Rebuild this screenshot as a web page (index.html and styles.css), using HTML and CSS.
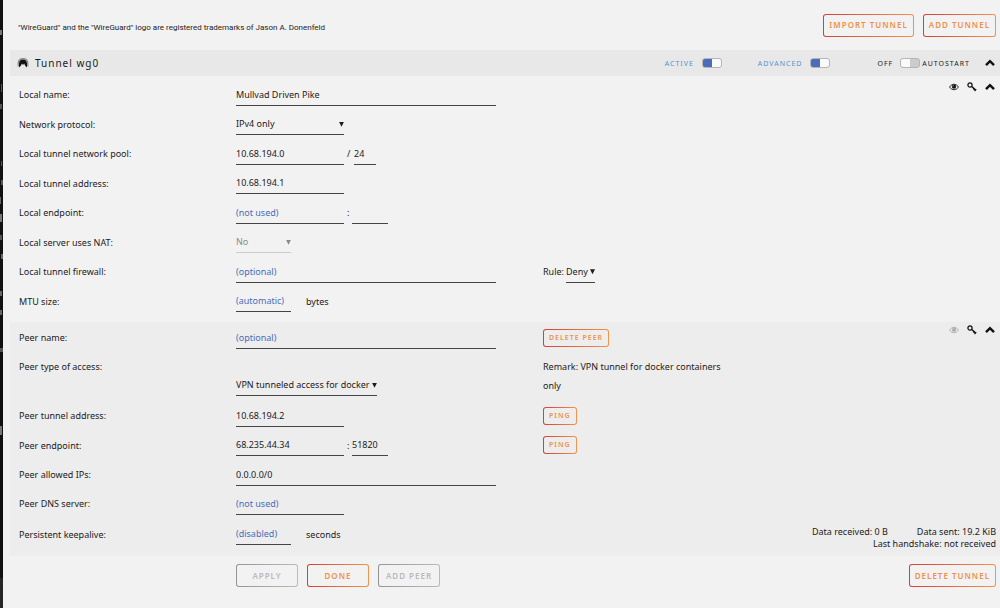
FILE: index.html
```html
<!DOCTYPE html>
<html lang="en">
<head>
<meta charset="utf-8">
<title>WireGuard VPN</title>
<link rel="stylesheet" href="styles.css">
</head>
<body>
<svg class="defs" aria-hidden="true">
  <symbol id="chevron" viewBox="0 0 10 8"><path d="M1 6.2 5 2.2 9 6.2" fill="none" stroke="currentColor" stroke-width="2.4"/></symbol>
  <symbol id="eye" viewBox="0 0 10 8"><path d="M.4 4Q5-1.6 9.600 4 5 9.600.4 4Z" fill="none" stroke="currentColor" stroke-width=".9"/><circle cx="5" cy="3.700" r="2.100" fill="currentColor"/><path d="M3.900 3.500Q4 2.600 4.900 2.500" fill="none" stroke="#eee" stroke-width=".5"/></symbol>
  <symbol id="key" viewBox="0 0 10 10"><circle cx="3" cy="3" r="2.100" fill="none" stroke="currentColor" stroke-width="1.200"/><path d="M4.500 4.300 8.800 8.200M6.200 7.500 7.500 5.800M7.500 9.200 9.200 7.200" fill="none" stroke="currentColor" stroke-width="1.300"/></symbol>
</svg>
<div class="edge" aria-hidden="true"></div>
<main class="page">
  <header class="top">
    <p class="notice">"WireGuard" and the "WireGuard" logo are registered trademarks of Jason A. Donenfeld</p>
    <div class="buttons">
      <button class="btn" type="button">IMPORT TUNNEL</button>
      <button class="btn" type="button">ADD TUNNEL</button>
    </div>
  </header>

  <div class="bar">
    <svg class="logo" viewBox="0 0 12 10" aria-hidden="true"><path d="M1.200 8.500V5.500C1.200 2.500 3.200.6 6 .6s4.800 1.900 4.800 4.900V8.500" fill="none" stroke="#888" stroke-width="1.200"/><path d="M2 9.500V5.500C2 3 3.500 1.400 6 1.400S10 3 10 5.500v4L8 7.500 7.200 5.500 6.600 7 6 5.500 5.400 7 4.800 5.500 4 7.500Z" fill="#111"/></svg>
    <h1 class="title">Tunnel wg0</h1>
    <label class="switch on active">ACTIVE <input type="checkbox" checked></label>
    <label class="switch on advanced">ADVANCED <input type="checkbox" checked></label>
    <label class="switch auto"><span>OFF</span><input type="checkbox"><span>AUTOSTART</span></label>
    <button class="icon" type="button" aria-label="Collapse tunnel"><svg><use href="#chevron"/></svg></button>
  </div>

  <form class="form">
    <section class="group local">
      <div class="row">
        <label for="name">Local name:</label>
        <div class="control"><input id="name" class="wide" type="text" value="Mullvad Driven Pike"></div>
        <div></div>
        <div class="icons">
          <button class="icon" type="button" aria-label="View tunnel"><svg><use href="#eye"/></svg></button>
          <button class="icon" type="button" aria-label="Tunnel keys"><svg><use href="#key"/></svg></button>
          <button class="icon" type="button" aria-label="Collapse local"><svg><use href="#chevron"/></svg></button>
        </div>
      </div>
      <div class="row">
        <label for="protocol">Network protocol:</label>
        <div class="control"><span class="select mid"><select id="protocol"><option>IPv4 only</option></select></span></div>
      </div>
      <div class="row">
        <label for="pool">Local tunnel network pool:</label>
        <div class="control"><input id="pool" class="mid" type="text" value="10.68.194.0"><span class="sep slash">/</span><input class="mask" type="text" value="24" aria-label="Network mask"></div>
      </div>
      <div class="row">
        <label for="address">Local tunnel address:</label>
        <div class="control"><input id="address" class="mid" type="text" value="10.68.194.1"></div>
      </div>
      <div class="row">
        <label for="endpoint">Local endpoint:</label>
        <div class="control"><input id="endpoint" class="mid" type="text" placeholder="(not used)"><span class="sep">:</span><input class="port" type="text" aria-label="Local port"></div>
      </div>
      <div class="row">
        <label for="nat">Local server uses NAT:</label>
        <div class="control"><span class="select small disabled"><select id="nat" disabled><option>No</option></select></span></div>
      </div>
      <div class="row">
        <label for="firewall">Local tunnel firewall:</label>
        <div class="control"><input id="firewall" class="wide" type="text" placeholder="(optional)"></div>
        <div class="control rule"><label for="rule">Rule:</label><span class="select tiny"><select id="rule"><option>Deny</option></select></span></div>
      </div>
      <div class="row">
        <label for="mtu">MTU size:</label>
        <div class="control"><input id="mtu" class="small" type="text" placeholder="(automatic)"><span class="unit">bytes</span></div>
      </div>
    </section>

    <section class="group peer">
      <div class="row">
        <label for="peer-name">Peer name:</label>
        <div class="control"><input id="peer-name" class="wide" type="text" placeholder="(optional)"></div>
        <div class="control"><button class="btn mini" type="button">DELETE PEER</button></div>
        <div class="icons">
          <button class="icon faded" type="button" aria-label="View peer"><svg><use href="#eye"/></svg></button>
          <button class="icon" type="button" aria-label="Peer keys"><svg><use href="#key"/></svg></button>
          <button class="icon" type="button" aria-label="Collapse peer"><svg><use href="#chevron"/></svg></button>
        </div>
      </div>
      <div class="row tall">
        <label for="access">Peer type of access:</label>
        <div class="control"><span class="select access"><select id="access"><option>VPN tunneled access for docker</option></select></span></div>
        <p class="remark">Remark: VPN tunnel for docker containers only</p>
      </div>
      <div class="row">
        <label for="peer-address">Peer tunnel address:</label>
        <div class="control"><input id="peer-address" class="mid" type="text" value="10.68.194.2"></div>
        <div class="control"><button class="btn mini" type="button">PING</button></div>
      </div>
      <div class="row">
        <label for="peer-endpoint">Peer endpoint:</label>
        <div class="control"><input id="peer-endpoint" class="mid" type="text" value="68.235.44.34"><span class="sep">:</span><input class="port" type="text" value="51820" aria-label="Peer port"></div>
        <div class="control"><button class="btn mini" type="button">PING</button></div>
      </div>
      <div class="row">
        <label for="allowed">Peer allowed IPs:</label>
        <div class="control"><input id="allowed" class="wide" type="text" value="0.0.0.0/0"></div>
      </div>
      <div class="row">
        <label for="dns">Peer DNS server:</label>
        <div class="control"><input id="dns" class="mid" type="text" placeholder="(not used)"></div>
      </div>
      <div class="row">
        <label for="keepalive">Persistent keepalive:</label>
        <div class="control"><input id="keepalive" class="small" type="text" placeholder="(disabled)"><span class="unit">seconds</span></div>
        <div></div>
        <div class="stats">
          <p class="traffic"><span>Data received: 0 B</span><span>Data sent: 19.2 KiB</span></p>
          <p>Last handshake: not received</p>
        </div>
      </div>
    </section>

    <footer class="row actions">
      <div class="buttons start">
        <button class="btn" type="button" disabled>APPLY</button>
        <button class="btn" type="button">DONE</button>
        <button class="btn" type="button" disabled>ADD PEER</button>
      </div>
      <button class="btn" type="button">DELETE TUNNEL</button>
    </footer>
  </form>
</main>
</body>
</html>
```
FILE: styles.css
```css
* { box-sizing: border-box; }

body {
  display: flex;
  min-height: 100vh;
  margin: 0;
  background: #f2f2f2;
  color: #1c1b1b;
  font: 9px/19px "Noto Sans", sans-serif;
}

p, h1 { margin: 0; }

.defs { position: absolute; width: 0; height: 0; }

.edge {
  flex: none;
  width: 3px;
  background:
    linear-gradient(#777, #777) 0 30px / 2px 5px no-repeat,
    linear-gradient(#555, #555) 1px 84px / 1px 8px no-repeat,
    linear-gradient(#555, #555) 0 104px / 2px 5px no-repeat,
    linear-gradient(#555, #555) 1px 161px / 1px 5px no-repeat,
    linear-gradient(#555, #555) 1px 180px / 2px 5px no-repeat,
    linear-gradient(#666, #666) 0 197px / 1px 7px no-repeat,
    linear-gradient(#777, #777) 0 214px / 2px 8px no-repeat,
    linear-gradient(#555, #555) 0 235px / 2px 5px no-repeat,
    linear-gradient(#666, #666) 1px 254px / 2px 5px no-repeat,
    linear-gradient(#666, #666) 0 291px / 2px 5px no-repeat,
    linear-gradient(#666, #666) 0 310px / 2px 5px no-repeat,
    linear-gradient(#555, #555) 0 348px / 3px 4px no-repeat,
    linear-gradient(#777, #777) 0 426px / 2px 9px no-repeat,
    linear-gradient(#111 578px, #262626 578px);
}

.page { flex: 1; min-width: 0; padding-left: 7px; }

.top {
  display: flex;
  align-items: center;
  justify-content: space-between;
  height: 50px;
  padding: 0 4px 0 8px;
}

.notice { padding-top: 5px; font-family: Roboto, sans-serif; font-size: 8px; }

.buttons { display: flex; gap: 9px; }

.btn {
  height: 23px;
  padding: 0 5px;
  border: 1px solid transparent;
  border-radius: 3px;
  background:
    linear-gradient(#f2f2f2, #f2f2f2) padding-box,
    linear-gradient(90deg, #d43f3c, #f2954b) border-box;
  color: #f0914a;
  font: 600 8px/12px "Noto Sans", sans-serif;
  letter-spacing: 1px;
  white-space: nowrap;
}

.btn:disabled {
  background:
    linear-gradient(#f2f2f2, #f2f2f2) padding-box,
    linear-gradient(90deg, #949494, #bbb) border-box;
  color: #b9b9b9;
}

.mini {
  height: 18px;
  background:
    linear-gradient(#ededed, #ededed) padding-box,
    linear-gradient(90deg, #d43f3c, #f2954b) border-box;
  font-size: 7px;
}

.bar {
  display: flex;
  align-items: center;
  height: 26px;
  padding: 0 5px 0 7px;
  background: #e8e8e8;
}

.logo { width: 12px; height: 10px; }

.title {
  flex: 1;
  padding-left: 6px;
  font-size: 10px;
  font-weight: 400;
  letter-spacing: 1px;
}

.switch {
  display: flex;
  align-items: center;
  gap: 8px;
  font-size: 7px;
  letter-spacing: 1px;
}

.on { color: #4f94cd; }
.active { margin-right: 36px; }
.advanced { margin-right: 47px; }
.auto { gap: 2px; margin-right: 15px; }
.auto span:first-child { padding-right: 5px; }

.switch input {
  appearance: none;
  width: 20px;
  height: 10px;
  margin: 0;
  border: 1px solid #b5b5b5;
  border-radius: 3px;
  background: linear-gradient(90deg, #fafafa 50%, #ccc 50%);
}

.on input { background: linear-gradient(90deg, #4a6cba 50%, #fafafa 50%); }

.icon {
  display: block;
  padding: 0;
  border: 0;
  background: none;
  color: #111;
}

.icon svg { display: block; width: 10px; height: 10px; }
.faded { color: #aaa; }

.group { display: flex; flex-direction: column; }
.local { min-height: 246px; padding: 4px 0 6px; }
.peer { min-height: 234px; padding: 1px 0 6px; background: #ededed; }

.row {
  display: grid;
  flex: 1;
  grid-template-columns: 217fr 307fr 190fr 263fr;
  align-items: center;
  padding: 0 4px 0 9px;
}

.control { display: flex; align-items: center; }

input[type="text"], select {
  height: 22px;
  margin: 0;
  padding: 0;
  border: 0;
  border-bottom: 1px solid #444;
  border-radius: 0;
  outline: 0;
  background: transparent;
  color: inherit;
  font: inherit;
}

::placeholder { color: #486dba; opacity: 1; }

.select { display: inline-grid; align-items: center; }
.select select, .select::after { grid-area: 1 / 1; }
.select select { appearance: none; width: 100%; opacity: 1; }

.select::after {
  content: "";
  justify-self: end;
  width: 5px;
  height: 5px;
  background: currentColor;
  clip-path: polygon(0 0, 100% 0, 50% 100%);
  pointer-events: none;
}

.disabled { color: #8a8a8a; }
.disabled select { border-color: #ccc; }

.wide { width: 260px; }
.mid { width: 108px; }
.small { width: 55px; }
.port { width: 36px; }
.mask { width: 22px; }
.tiny { width: 29px; }
.access { width: 141px; }

.sep { width: 8px; padding-left: 3px; }
.slash { width: 10px; }
.unit { padding-left: 15px; }
.rule { gap: 2px; }

.icons {
  display: flex;
  align-self: start;
  justify-content: flex-end;
  gap: 8px;
  padding: 2px 1px 0 0;
}

.tall { flex: none; align-items: start; padding-top: 5px; padding-bottom: 5px; }
.tall .control { padding-top: 17px; }

.stats { align-self: end; line-height: 12px; text-align: right; }
.traffic { display: flex; justify-content: flex-end; gap: 29px; }

.actions { grid-template-columns: 217fr 307fr 453fr; padding-top: 8px; }
.actions > :last-child { justify-self: end; }
.start { grid-column: 2; }
.start .btn { min-width: 62px; }
```
